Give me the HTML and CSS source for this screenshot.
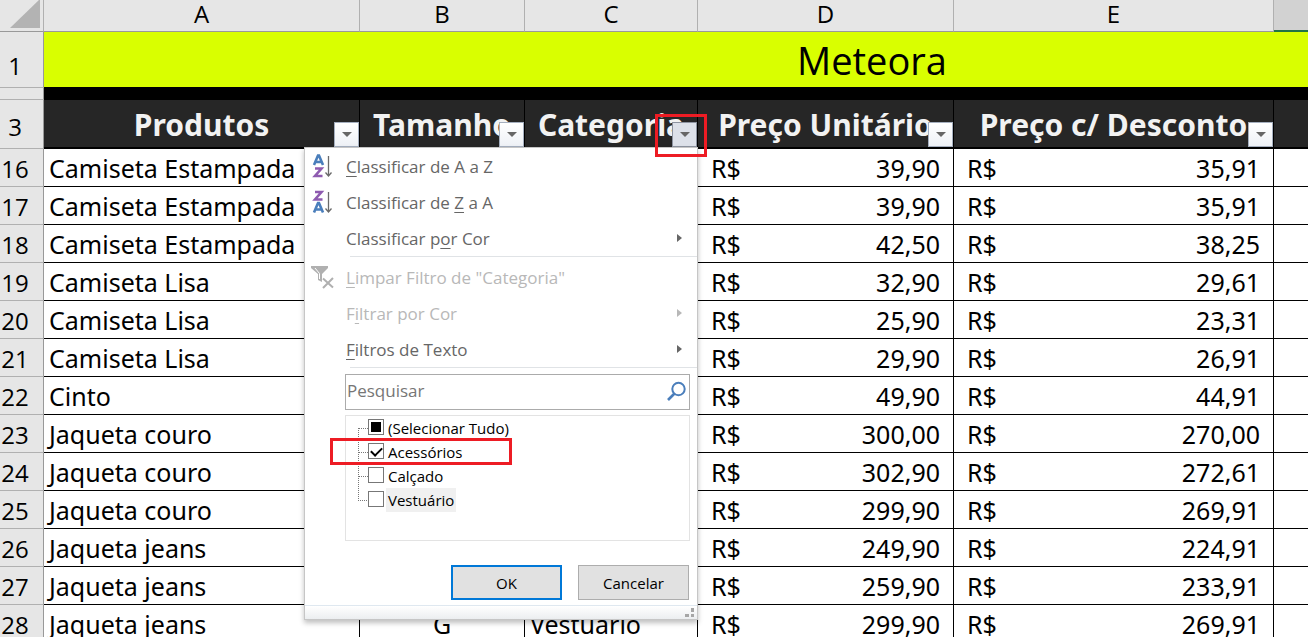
FILE: index.html
```html
<!DOCTYPE html>
<html lang="pt-BR">
<head>
<meta charset="utf-8">
<title>Meteora</title>
<link rel="stylesheet" href="styles.css">
</head>
<body>
<main class="workbook">
  <table class="sheet">
    <colgroup>
      <col class="col-num"><col class="col-a"><col class="col-b"><col class="col-c"><col class="col-d"><col class="col-e"><col class="col-f">
    </colgroup>
    <thead>
      <tr class="letters">
        <th class="corner"><svg width="44" height="31" viewBox="0 0 44 31" aria-hidden="true"><path d="M40 -1V28H10Z" fill="#b3b3b3"/></svg></th>
        <th>A</th><th>B</th><th>C</th><th>D</th><th>E</th><th class="active"></th>
      </tr>
      <tr class="title-row"><th class="num">1</th><th class="title" colspan="6">Meteora</th></tr>
      <tr class="thin-row"><th class="num"></th><td colspan="6"></td></tr>
      <tr class="head-row">
        <th class="num">3</th>
        <th>Produtos<button class="filter" aria-label="Filtrar Produtos"></button></th>
        <th>Tamanho<button class="filter" aria-label="Filtrar Tamanho"></button></th>
        <th>Categoria<button class="filter pressed" aria-label="Filtrar Categoria"></button></th>
        <th>Preço Unitário<button class="filter" aria-label="Filtrar Preço Unitário"></button></th>
        <th>Preço c/ Desconto<button class="filter" aria-label="Filtrar Preço com Desconto"></button></th>
        <th></th>
      </tr>
    </thead>
    <tbody>
      <tr><th class="num">16</th><td>Camiseta Estampada</td><td></td><td></td><td class="money"><div><span>R$</span><span>39,90</span></div></td><td class="money"><div><span>R$</span><span>35,91</span></div></td><td></td></tr>
      <tr><th class="num">17</th><td>Camiseta Estampada</td><td></td><td></td><td class="money"><div><span>R$</span><span>39,90</span></div></td><td class="money"><div><span>R$</span><span>35,91</span></div></td><td></td></tr>
      <tr><th class="num">18</th><td>Camiseta Estampada</td><td></td><td></td><td class="money"><div><span>R$</span><span>42,50</span></div></td><td class="money"><div><span>R$</span><span>38,25</span></div></td><td></td></tr>
      <tr><th class="num">19</th><td>Camiseta Lisa</td><td></td><td></td><td class="money"><div><span>R$</span><span>32,90</span></div></td><td class="money"><div><span>R$</span><span>29,61</span></div></td><td></td></tr>
      <tr><th class="num">20</th><td>Camiseta Lisa</td><td></td><td></td><td class="money"><div><span>R$</span><span>25,90</span></div></td><td class="money"><div><span>R$</span><span>23,31</span></div></td><td></td></tr>
      <tr><th class="num">21</th><td>Camiseta Lisa</td><td></td><td></td><td class="money"><div><span>R$</span><span>29,90</span></div></td><td class="money"><div><span>R$</span><span>26,91</span></div></td><td></td></tr>
      <tr><th class="num">22</th><td>Cinto</td><td></td><td></td><td class="money"><div><span>R$</span><span>49,90</span></div></td><td class="money"><div><span>R$</span><span>44,91</span></div></td><td></td></tr>
      <tr><th class="num">23</th><td>Jaqueta couro</td><td></td><td></td><td class="money"><div><span>R$</span><span>300,00</span></div></td><td class="money"><div><span>R$</span><span>270,00</span></div></td><td></td></tr>
      <tr><th class="num">24</th><td>Jaqueta couro</td><td></td><td></td><td class="money"><div><span>R$</span><span>302,90</span></div></td><td class="money"><div><span>R$</span><span>272,61</span></div></td><td></td></tr>
      <tr><th class="num">25</th><td>Jaqueta couro</td><td></td><td></td><td class="money"><div><span>R$</span><span>299,90</span></div></td><td class="money"><div><span>R$</span><span>269,91</span></div></td><td></td></tr>
      <tr><th class="num">26</th><td>Jaqueta jeans</td><td></td><td></td><td class="money"><div><span>R$</span><span>249,90</span></div></td><td class="money"><div><span>R$</span><span>224,91</span></div></td><td></td></tr>
      <tr><th class="num">27</th><td>Jaqueta jeans</td><td></td><td></td><td class="money"><div><span>R$</span><span>259,90</span></div></td><td class="money"><div><span>R$</span><span>233,91</span></div></td><td></td></tr>
      <tr><th class="num">28</th><td>Jaqueta jeans</td><td class="size">G</td><td>Vestuário</td><td class="money"><div><span>R$</span><span>299,90</span></div></td><td class="money"><div><span>R$</span><span>269,91</span></div></td><td></td></tr>
    </tbody>
  </table>

  <form class="popup">
    <div class="group">
      <button type="button" class="item">
        <svg class="icon" width="24" height="28" viewBox="0 0 24 28" aria-hidden="true"><path d="M3 13L7 3.500H8L12 13M4.500 10H10.500" fill="none" stroke="#4a7ebb" stroke-width="2.600"/><path d="M4 16.500H10.500L4 24H11.500" fill="none" stroke="#8e5bb0" stroke-width="2.600"/><path d="M17.500 4V24M14.500 20.500L17.500 24L20.500 20.500" fill="none" stroke="#6a6a6a" stroke-width="1.300"/></svg>
        <span><u>C</u>lassificar de A a Z</span></button>
      <button type="button" class="item">
        <svg class="icon" width="24" height="28" viewBox="0 0 24 28" aria-hidden="true"><path d="M4 4H10.500L4 11.500H11.500" fill="none" stroke="#8e5bb0" stroke-width="2.600"/><path d="M3 24.500L7 15H8L12 24.500M4.500 21.500H10.500" fill="none" stroke="#4a7ebb" stroke-width="2.600"/><path d="M17.500 4V24M14.500 20.500L17.500 24L20.500 20.500" fill="none" stroke="#6a6a6a" stroke-width="1.300"/></svg>
        <span>Classificar de <u>Z</u> a A</span></button>
      <button type="button" class="item sub"><span>Classificar p<u>o</u>r Cor</span></button>
    </div>
    <div class="group group-filter">
      <button type="button" class="item" disabled>
        <svg class="icon" width="24" height="28" viewBox="0 0 24 28" aria-hidden="true"><path d="M0 3H17V5L11 11V19L7 17V11L0 5Z" fill="#b0b0b0"/><path d="M4 5L8.500 10.500V16" fill="none" stroke="#fff" stroke-width="1"/><path d="M12 15.500L22 24.500M22 15L12 25" stroke="#b0b0b0" stroke-width="2" fill="none"/></svg>
        <span><u>L</u>impar Filtro de "Categoria"</span></button>
      <button type="button" class="item sub" disabled><span>F<u>i</u>ltrar por Cor</span></button>
      <button type="button" class="item sub"><span><u>F</u>iltros de Texto</span></button>
    </div>
    <div class="picker">
      <div class="search">
        <input type="text" placeholder="Pesquisar" aria-label="Pesquisar">
        <svg width="20" height="26" viewBox="0 0 20 26" aria-hidden="true"><circle cx="12.500" cy="11" r="6.200" fill="none" stroke="#4a7ebb" stroke-width="2"/><path d="M8.500 15.500L2 22" stroke="#4a7ebb" stroke-width="2.600"/></svg>
      </div>
      <ul class="tree">
        <li><input type="checkbox" id="all" class="partial"><label for="all">(Selecionar Tudo)</label></li>
        <li><input type="checkbox" id="acc" checked><label for="acc">Acessórios</label></li>
        <li><input type="checkbox" id="shoe"><label for="shoe">Calçado</label></li>
        <li><input type="checkbox" id="wear"><label for="wear" class="focused">Vestuário</label></li>
      </ul>
      <div class="actions"><button type="button" class="ok">OK</button><button type="button">Cancelar</button></div>
    </div>
    <div class="grip"><svg width="10" height="10" viewBox="0 0 10 10" aria-hidden="true"><path d="M6 0H9V4H6ZM6 6H9V9H6ZM0 6H4V9H0Z" fill="#a6a6a6"/></svg></div>
  </form>
  <div class="mark mark-filter"></div>
  <div class="mark mark-option"></div>
</main>
</body>
</html>
```
FILE: styles.css
```css
* { box-sizing: border-box; }
body { margin: 0; overflow: hidden; background: #fff; color: #000; font-family: "Open Sans", sans-serif; }
button, input { font-family: inherit; }
.workbook { position: relative; height: 100vh; overflow: hidden; }

.sheet { table-layout: fixed; width: 1700px; border-collapse: separate; border-spacing: 0; font-family: "Noto Sans", sans-serif; font-size: 25px; line-height: 32px; }
.col-num { width: 44px; }
.col-a { width: 316px; }
.col-b { width: 165px; }
.col-c { width: 173px; }
.col-d { width: 256px; }
.col-e { width: 320px; }
.sheet th, .sheet td { padding: 0; font-weight: 400; white-space: nowrap; }
.letters th { height: 32px; line-height: 28px; background: #e6e6e6; border-bottom: 1px solid #999; border-right: 1px solid #b0b0b0; font-family: "Open Sans", sans-serif; font-size: 24px; }
.sheet .letters th { padding-bottom: 3px; }
.letters .active { background: #d2d2d2; border-bottom: 2px solid #217346; }
.corner svg { display: block; }
.sheet .letters .corner { padding: 0; }
.sheet .num { background: #e6e6e6; border-right: 1px solid #999; border-bottom: 1px solid #b0b0b0; padding: 0 13px 1px 0; vertical-align: bottom; text-align: center; font-family: "Open Sans", sans-serif; font-size: 24px; }
.title-row th { height: 56px; }
.sheet .title-row .num { padding-bottom: 5px; }
.sheet .title { background: #d9ff00; border-bottom: 1px solid #000; font-family: "Open Sans", sans-serif; font-size: 38px; }
.sheet .thin-row .num { padding: 0; }
.thin-row td { height: 12px; background: #000; }
.head-row th { position: relative; height: 49px; background: #262626; color: #f2f2f2; border-right: 1px solid #000; border-bottom: 2px solid #000; }
.sheet .head-row th { padding-top: 2px; font-weight: 700; font-size: 30px; }
.sheet .head-row .num { color: #000; font-weight: 400; font-size: 24px; padding: 0 13px 5px 0; }
.filter { position: absolute; right: 0; bottom: 0; width: 25px; height: 25px; padding: 0; border: 1px solid #a5afbf; background: linear-gradient(#fff, #eef1f6); }
.filter::after { content: ""; position: absolute; left: 7px; top: 9px; border: 5px solid transparent; border-top-color: #666; border-bottom: 0; }
.filter.pressed { background: #dde1e9; border-color: #8d93a0; }
tbody td { height: 38px; border-right: 1px solid #000; border-bottom: 1px solid #000; }
.sheet tbody td { padding: 0 5px; }
.sheet tbody .num { height: 38px; }
.sheet tbody .size { text-align: center; }
.sheet tbody .money { padding: 0 13px; }
.money div { display: flex; justify-content: space-between; }

.popup { position: absolute; left: 304px; top: 147px; width: 394px; background: #fff; border: 1px solid #c6c6c6; box-shadow: 0 3px 5px rgba(0, 0, 0, .25); }
.group { position: relative; padding: 0 0 1px; }
.group-filter { padding-top: 2px; }
.group::after { content: ""; position: absolute; left: 45px; right: 0; bottom: 0; border-bottom: 1px solid #e0e3e6; }
.item { display: flex; align-items: center; position: relative; width: 100%; height: 36px; padding: 2px 0 0 41px; border: 0; background: none; color: #666; font-size: 17px; line-height: 24px; }
.item u { text-underline-offset: 3px; }
.item:disabled { color: #b8b8b8; }
.icon { position: absolute; left: 6px; top: 4px; }
.sub::after { content: ""; position: absolute; right: 15px; top: 14px; border: 4px solid transparent; border-left: 5px solid #666; border-right: 0; }
.sub:disabled::after { border-left-color: #b8b8b8; }
.picker { padding: 6px 7px 5px 40px; }
.search { display: flex; align-items: flex-start; height: 36px; padding: 3px 3px 0 1px; border: 1px solid #ababab; }
.search input { flex: 1; min-width: 0; height: 24px; padding: 0; border: 0; outline: 0; font-size: 17px; color: #666; }
.search input::placeholder { color: #767676; opacity: 1; }
.tree { height: 126px; margin: 5px 0 24px; padding: 0; list-style: none; border: 1px solid #e3e3e3; font-size: 15px; line-height: 24px; }
.tree li { position: relative; display: flex; height: 24px; padding-left: 22px; }
.tree li::before { content: ""; position: absolute; left: 12px; top: 12px; width: 9px; height: 24px; border-left: 1px dotted #777; border-top: 1px dotted #777; }
.tree li:last-child::before { border-left: 0; }
.tree input { appearance: none; flex: none; width: 16px; height: 16px; margin: 3px 2px 0 0; border: 1px solid #777; background: #fff; }
.tree .partial { border: 1px solid #777; background: #000; box-shadow: inset 0 0 0 2px #fff; }
.tree input:checked::after { content: ""; display: block; width: 9px; height: 5px; margin: 3px 0 0 2px; border: solid #000; border-width: 0 0 2px 2px; transform: rotate(-45deg); }
.tree label { padding: 0 2px; }
.tree .focused { background: #f0f0f0; }
.actions { display: flex; justify-content: flex-end; gap: 16px; padding-right: 1px; }
.actions button { width: 111px; height: 35px; border: 1px solid #adadad; background: #e1e1e1; color: #000; font-size: 15px; }
.actions .ok { border: 2px solid #0078d7; }
.grip { display: flex; justify-content: flex-end; align-items: flex-start; height: 14px; padding: 2px 2px 0 0; border-top: 1px solid #dfe8f0; background: linear-gradient(#fff, #eceef0); }

.mark { position: absolute; border: 3px solid #ed1c24; pointer-events: none; }
.mark-filter { left: 655px; top: 114px; width: 52px; height: 43px; }
.mark-option { left: 330px; top: 438px; width: 182px; height: 27px; }
```
